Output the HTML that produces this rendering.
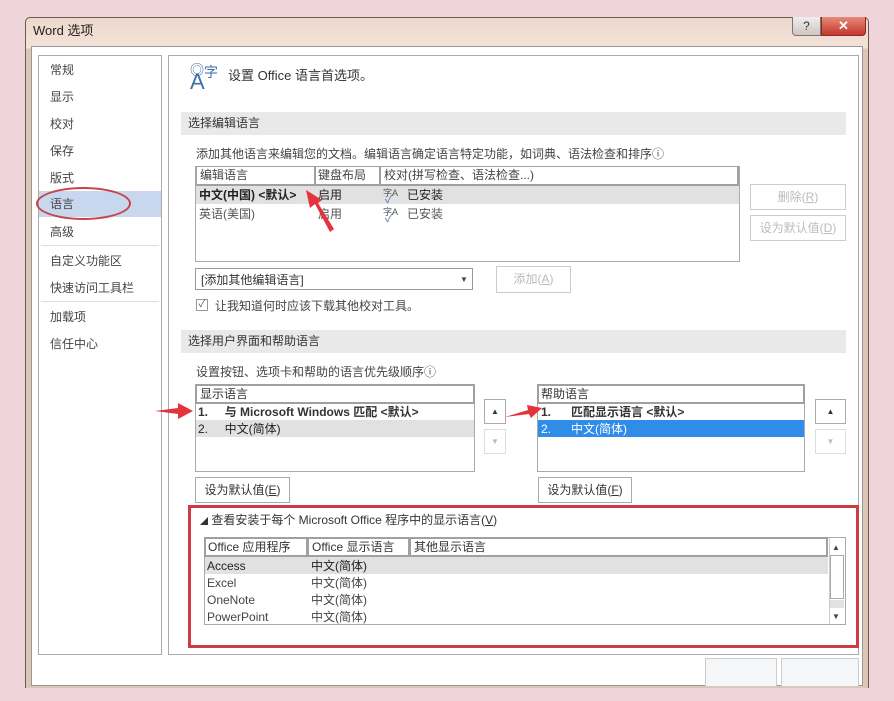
<!DOCTYPE html>
<html><head><meta charset="utf-8"><style>
*{box-sizing:border-box;margin:0;padding:0}
body{width:894px;height:701px;background:#efd5da;position:relative;overflow:hidden;font-family:"Liberation Sans","Noto Sans CJK SC",sans-serif;font-size:12px;color:#444}
.a{position:absolute}
.t{position:absolute;white-space:nowrap;line-height:16px}
.box{position:absolute;border:1px solid #aaa;background:#fff}
.hdr{position:absolute;border:2px solid #a0a0a0;background:#fff;height:20px}
.btn{position:absolute;border:1px solid #ccc;background:#fff;text-align:center;line-height:24px;color:#bbb}
.sec{position:absolute;background:#e9e9e9;height:23px;left:181px;width:665px;line-height:23px;padding-left:7px;color:#333}
</style></head><body>
<div class="a" style="left:25px;top:17px;width:844px;height:672px;background:linear-gradient(180deg,#eed8cc,#f3e2d8 30px,#ddc6b6 31px,#ddc6b6);border:1px solid #6b5a50;border-radius:5px 5px 0 0"></div>
<div class="t" style="left:33px;top:23px;font-size:13px;color:#222">Word 选项</div>
<div class="a" style="left:792px;top:17px;width:29px;height:19px;border:1px solid #777;border-top:none;border-radius:0 0 0 4px;background:linear-gradient(#eee,#cfc5c0);text-align:center;font-size:12px;line-height:18px;color:#333">?</div>
<div class="a" style="left:821px;top:17px;width:45px;height:19px;border:1px solid #8a2a22;border-top:none;border-radius:0 0 4px 0;background:linear-gradient(#e88a7a,#c4382a);text-align:center;color:#fff;font-weight:bold;line-height:18px;font-size:13px">✕</div>
<div class="a" style="left:31px;top:46px;width:832px;height:640px;background:#fff;border:1px solid #999"></div>
<div class="box" style="left:38px;top:55px;width:124px;height:600px"></div>
<div class="a" style="left:39px;top:191px;width:122px;height:26px;background:#c8d7ee"></div>
<div class="t" style="left:50px;top:62px">常规</div>
<div class="t" style="left:50px;top:89px">显示</div>
<div class="t" style="left:50px;top:116px">校对</div>
<div class="t" style="left:50px;top:143px">保存</div>
<div class="t" style="left:50px;top:170px">版式</div>
<div class="t" style="left:50px;top:196px">语言</div>
<div class="t" style="left:50px;top:224px">高级</div>
<div class="a" style="left:41px;top:245px;width:118px;height:1px;background:#ddd"></div>
<div class="t" style="left:50px;top:253px">自定义功能区</div>
<div class="t" style="left:50px;top:280px">快速访问工具栏</div>
<div class="a" style="left:41px;top:301px;width:118px;height:1px;background:#ddd"></div>
<div class="t" style="left:50px;top:309px">加载项</div>
<div class="t" style="left:50px;top:336px">信任中心</div>
<div class="a" style="left:36px;top:187px;width:95px;height:33px;border:2px solid #c7434a;border-radius:50%"></div>
<div class="box" style="left:168px;top:55px;width:691px;height:600px"></div>
<div class="t" style="left:190px;top:62px;font-size:14px;color:#3a6fa8">◎</div>
<div class="t" style="left:190px;top:71px;font-size:22px;line-height:22px;color:#3a6fa8">A</div>
<div class="t" style="left:204px;top:64px;font-size:14px;color:#3a6fa8">字</div>
<div class="t" style="left:228px;top:68px;font-size:13px;color:#333">设置 Office 语言首选项。</div>
<div class="sec" style="top:112px">选择编辑语言</div>
<div class="t" style="left:196px;top:146px">添加其他语言来编辑您的文档。编辑语言确定语言特定功能，如词典、语法检查和排序ⓘ</div>
<div class="box" style="left:195px;top:166px;width:545px;height:96px"></div>
<div class="hdr" style="left:196px;top:166px;width:543px;background:#a0a0a0"></div>
<div class="a" style="left:197px;top:167px;width:117px;height:17px;background:#fff"></div>
<div class="a" style="left:316px;top:167px;width:63px;height:17px;background:#fff"></div>
<div class="a" style="left:381px;top:167px;width:356px;height:17px;background:#fff"></div>
<div class="t" style="left:200px;top:167px">编辑语言</div>
<div class="t" style="left:318px;top:167px">键盘布局</div>
<div class="t" style="left:384px;top:167px">校对(拼写检查、语法检查...)</div>
<div class="a" style="left:196px;top:186px;width:543px;height:18px;background:#e1e1e1"></div>
<div class="t" style="left:199px;top:187px;font-weight:600;color:#222">中文(中国) &lt;默认&gt;</div>
<div class="t" style="left:318px;top:187px;color:#222">启用</div>
<div class="t" style="left:383px;top:185px;font-size:9px;color:#555">字A</div>
<div class="t" style="left:385px;top:191px;color:#5a7fb0">✓</div>
<div class="t" style="left:407px;top:187px;color:#222">已安装</div>
<div class="t" style="left:199px;top:206px;color:#555">英语(美国)</div>
<div class="t" style="left:318px;top:206px;color:#555">启用</div>
<div class="t" style="left:383px;top:204px;font-size:9px;color:#555">字A</div>
<div class="t" style="left:385px;top:210px;color:#5a7fb0">✓</div>
<div class="t" style="left:407px;top:206px;color:#555">已安装</div>
<div class="btn" style="left:750px;top:184px;width:96px;height:26px">删除(<u>R</u>)</div>
<div class="btn" style="left:750px;top:215px;width:96px;height:26px">设为默认值(<u>D</u>)</div>
<div class="box" style="left:195px;top:268px;width:278px;height:22px;border-color:#999"></div>
<div class="t" style="left:201px;top:272px;color:#333">[添加其他编辑语言]</div>
<div class="t" style="left:460px;top:272px;font-size:8px;color:#444">▼</div>
<div class="btn" style="left:496px;top:266px;width:75px;height:27px">添加(<u>A</u>)</div>
<div class="a" style="left:196px;top:299px;width:12px;height:12px;border:1px solid #999;font-size:10px;line-height:10px;text-align:center;color:#555">✓</div>
<div class="t" style="left:215px;top:298px">让我知道何时应该下载其他校对工具。</div>
<div class="sec" style="top:330px">选择用户界面和帮助语言</div>
<div class="t" style="left:196px;top:364px">设置按钮、选项卡和帮助的语言优先级顺序ⓘ</div>
<div class="box" style="left:195px;top:384px;width:280px;height:88px"></div>
<div class="hdr" style="left:195px;top:384px;width:280px"></div>
<div class="t" style="left:200px;top:386px;color:#333">显示语言</div>
<div class="t" style="left:198px;top:404px;font-weight:600;color:#333">1.&nbsp;&nbsp;&nbsp;&nbsp;&nbsp;与 Microsoft Windows 匹配 &lt;默认&gt;</div>
<div class="a" style="left:196px;top:420px;width:278px;height:17px;background:#e1e1e1"></div>
<div class="t" style="left:198px;top:421px;color:#222">2.&nbsp;&nbsp;&nbsp;&nbsp;&nbsp;中文(简体)</div>
<div class="box" style="left:484px;top:399px;width:22px;height:25px;text-align:center;line-height:24px;font-size:8px;color:#333">▲</div>
<div class="box" style="left:484px;top:429px;width:22px;height:25px;border-color:#ddd;text-align:center;line-height:24px;font-size:8px;color:#bbb">▼</div>
<div class="btn" style="left:195px;top:477px;width:95px;height:26px;color:#333;border-color:#aaa">设为默认值(<u>E</u>)</div>
<div class="box" style="left:537px;top:384px;width:268px;height:88px"></div>
<div class="hdr" style="left:537px;top:384px;width:268px"></div>
<div class="t" style="left:541px;top:386px;color:#333">帮助语言</div>
<div class="t" style="left:541px;top:404px;font-weight:600;color:#333">1.&nbsp;&nbsp;&nbsp;&nbsp;&nbsp;&nbsp;匹配显示语言 &lt;默认&gt;</div>
<div class="a" style="left:538px;top:420px;width:266px;height:17px;background:#2f8ce8"></div>
<div class="t" style="left:541px;top:421px;color:#fff">2.&nbsp;&nbsp;&nbsp;&nbsp;&nbsp;&nbsp;中文(简体)</div>
<div class="box" style="left:815px;top:399px;width:31px;height:25px;text-align:center;line-height:24px;font-size:8px;color:#333">▲</div>
<div class="box" style="left:815px;top:429px;width:31px;height:25px;border-color:#ddd;text-align:center;line-height:24px;font-size:8px;color:#bbb">▼</div>
<div class="btn" style="left:538px;top:477px;width:94px;height:26px;color:#333;border-color:#aaa">设为默认值(<u>F</u>)</div>
<div class="a" style="left:188px;top:505px;width:671px;height:143px;border:3px solid #cf3b45"></div>
<div class="t" style="left:200px;top:512px;color:#333"><span style="font-size:8px">◢</span> 查看安装于每个 Microsoft Office 程序中的显示语言(<u>V</u>)</div>
<div class="box" style="left:204px;top:537px;width:642px;height:88px"></div>
<div class="hdr" style="left:204px;top:537px;width:624px;background:#a0a0a0"></div>
<div class="a" style="left:206px;top:539px;width:100px;height:16px;background:#fff"></div>
<div class="a" style="left:309px;top:539px;width:99px;height:16px;background:#fff"></div>
<div class="a" style="left:411px;top:539px;width:415px;height:16px;background:#fff"></div>
<div class="t" style="left:208px;top:539px;color:#333">Office 应用程序</div>
<div class="t" style="left:312px;top:539px;color:#333">Office 显示语言</div>
<div class="t" style="left:414px;top:539px;color:#333">其他显示语言</div>
<div class="a" style="left:205px;top:557px;width:623px;height:17px;background:#e1e1e1"></div>
<div class="t" style="left:207px;top:558px;color:#222">Access</div><div class="t" style="left:311px;top:558px;color:#222">中文(简体)</div>
<div class="t" style="left:207px;top:575px">Excel</div><div class="t" style="left:311px;top:575px">中文(简体)</div>
<div class="t" style="left:207px;top:592px">OneNote</div><div class="t" style="left:311px;top:592px">中文(简体)</div>
<div class="t" style="left:207px;top:609px">PowerPoint</div><div class="t" style="left:311px;top:609px">中文(简体)</div>
<div class="a" style="left:829px;top:538px;width:16px;height:86px;border-left:1px solid #ccc;background:#fff"></div>
<div class="t" style="left:832px;top:540px;font-size:8px">▲</div>
<div class="a" style="left:830px;top:555px;width:14px;height:44px;border:1px solid #aaa"></div>
<div class="a" style="left:830px;top:600px;width:14px;height:8px;background:#e1e1e1"></div>
<div class="t" style="left:832px;top:609px;font-size:8px">▼</div>
<svg class="a" style="left:0;top:0" width="894" height="701">
<path d="M330 232 L315 204 L310 208 L306 190 L322 200 L318 203 L334 229 Z" fill="#e5333b"/>
<path d="M155 411 L178 408 L178 403 L193 411 L178 419 L178 414 Z" fill="#e5333b"/>
<path d="M505 417 L528 410 L527 405 L542 408 L531 418 L529 414 Z" fill="#e5333b"/>
</svg>
<div class="a" style="left:705px;top:658px;width:72px;height:29px;border:1px solid #ccc;background:#f4f6f8"></div>
<div class="a" style="left:781px;top:658px;width:78px;height:29px;border:1px solid #ccc;background:#f4f6f8"></div>
<div class="a" style="left:0;top:688px;width:894px;height:13px;background:#efd5da"></div>
</body></html>
